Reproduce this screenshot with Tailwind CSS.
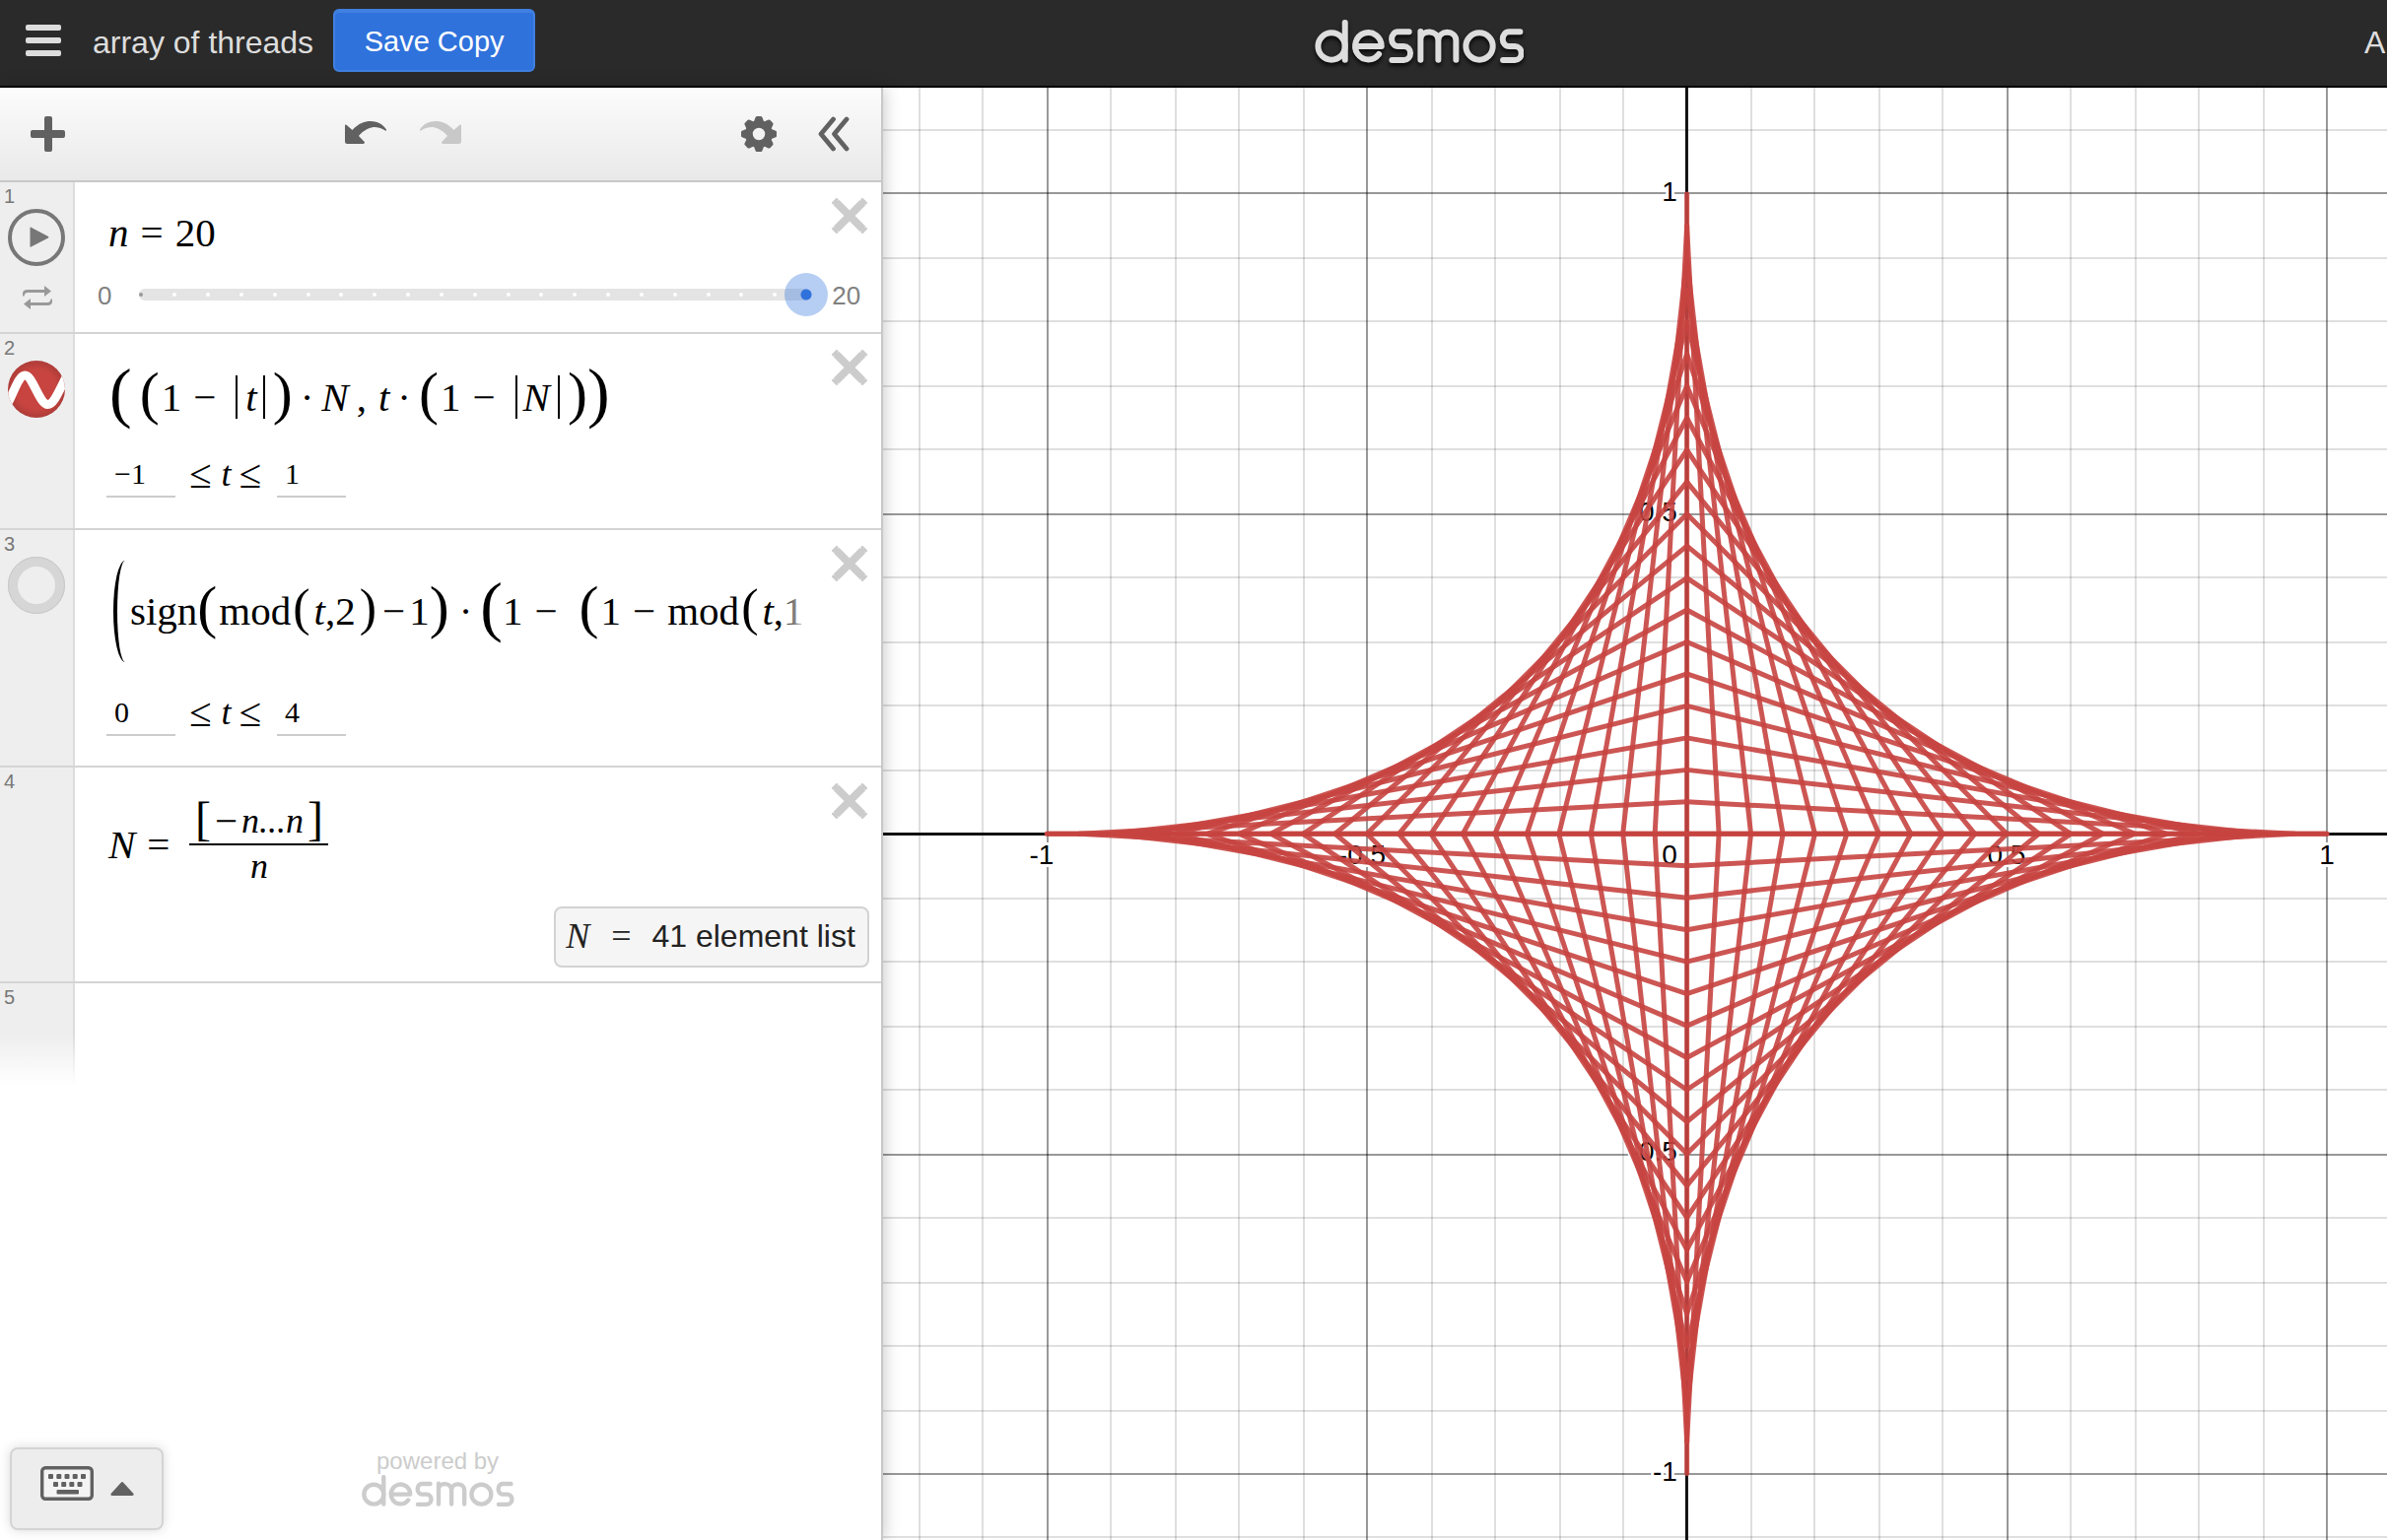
<!DOCTYPE html>
<html lang="en">
<head>
<meta charset="utf-8">
<title>array of threads</title>
<script src="https://cdn.jsdelivr.net/npm/@tailwindcss/browser@4"></script>
</head>
<body class="flex h-screen flex-col overflow-hidden bg-white font-['Liberation_Sans',Arial,sans-serif]">

<svg class="hidden">
  <symbol id="logo" viewBox="0 0 212 44">
    <g transform="translate(-33.6 -20) scale(.3333)" fill="none" stroke="currentColor" stroke-width="18" stroke-linecap="round" stroke-linejoin="round">
      <circle cx="152" cy="141" r="41"/><path d="M193 69V182"/>
      <path d="M225 141H304A40 41 0 1 0 296 165"/>
      <path d="M388 97H354A19 22 0 0 0 354 141H372A20 21 0 0 1 372 183H336"/>
      <path d="M423 182V96M423 118C426 90 477 90 477 124V182M477 124C477 90 531 90 531 124V182"/>
      <circle cx="602" cy="141" r="41"/>
      <path d="M726 97H692A19 22 0 0 0 692 141H710A20 21 0 0 1 710 183H674"/>
    </g>
  </symbol>
  <symbol id="cross" viewBox="0 0 36 36">
    <path d="M4.500 4.500L31.500 31.500M31.500 4.500L4.500 31.500" stroke="#ccc" stroke-width="8" stroke-linecap="butt"/>
    <path d="M4.500 4.500L31.500 31.500M31.500 4.500L4.500 31.500" stroke="#ccc" stroke-width="5" stroke-linecap="round"/>
    <path d="M5 1.500L1.500 5M31 1.500L34.500 5M5 34.500L1.500 31M31 34.500L34.500 31" stroke="#ccc" stroke-width="3" stroke-linecap="round"/>
  </symbol>
  <symbol id="undo" viewBox="0 0 42 23">
    <path fill="currentColor" d="M1.500 3.800L7.500 9C14 2 20 0 26 0C34 0 39 4 42 8.500C42 10 41.500 10 40.500 9.200C36 6.500 31 5.600 28 6.200C22 7.500 17 11 14 15L20 21.300Q20 23 18.500 23H2.500Q0 23 0 20.500V5Q0 3 1.500 3.800Z"/>
  </symbol>
</svg>

<header class="flex h-[89px] shrink-0 items-start border-b-2 border-black bg-[#2a2a2a] text-[#ddd]">
  <div class="flex w-[55%] items-start pl-[26px]">
    <button aria-label="Menu" class="mt-[25px] flex w-9 flex-col gap-[7px]">
      <span class="h-1.5 w-full rounded-xs bg-[#ddd]"></span>
      <span class="h-1.5 w-full rounded-xs bg-[#ddd]"></span>
      <span class="h-1.5 w-full rounded-xs bg-[#ddd]"></span>
    </button>
    <h1 class="ml-8 mt-[27px] text-[32px] leading-8 whitespace-nowrap">array of threads</h1>
    <button class="ml-5 mt-[9px] h-16 w-[205px] rounded-md border-2 border-[#4080e0] bg-[#2f72dc] pt-[3px] text-[29px] leading-none whitespace-nowrap text-white shadow-[inset_0_2px_0_#4080e0]">Save Copy</button>
  </div>
  <svg class="ml-0.5 mt-5 h-11 w-[212px] overflow-visible drop-shadow-[0_3px_2px_rgba(0,0,0,0.8)]" role="img" aria-label="desmos"><use href="#logo"/></svg>
  <a href="#" class="ml-auto mt-[27px] w-[23px] text-[32px] leading-8 whitespace-nowrap">A</a>
</header>

<main class="flex min-h-0 flex-1">
  <section class="z-10 flex w-[37%] shrink-0 flex-col border-r-2 border-[#c8c8c8] bg-white shadow-[0_0_16px_rgba(0,0,0,0.25)]">

    <div class="flex h-24 shrink-0 items-center border-b-2 border-[#c8c8c8] bg-linear-to-b from-[#fcfcfc] to-[#e9e9e9] pl-[31px] pr-8 text-[#616161]">
      <button aria-label="Add item"><svg class="h-9 w-9" viewBox="0 0 36 36"><path fill="currentColor" d="M16 0h4q2 0 2 2v12h11q2 0 2 2v4q0 2-2 2H22v12q0 2-2 2h-4q-2 0-2-2V22H2q-2 0-2-2v-4q0-2 2-2h12V2q0-2 2-2z"/></svg></button>
      <div class="flex flex-1 justify-center gap-[34px] pb-1 pr-0.5">
        <button aria-label="Undo"><svg class="h-[23px] w-[42px]"><use href="#undo"/></svg></button>
        <button aria-label="Redo" disabled class="text-[#c8c8c8]"><svg class="h-[23px] w-[42px] -scale-x-100"><use href="#undo"/></svg></button>
      </div>
      <button aria-label="Graph settings"><svg class="h-9 w-9" viewBox="-18 -18 36 36" fill="currentColor">
        <circle r="10" fill="none" stroke="currentColor" stroke-width="7.500"/>
        <g id="t"><path id="tooth" d="M-5.500-11.500L-3.600-16.500Q-3.300-18-2-18H2Q3.300-18 3.600-16.500L5.500-11.500Z"/><use href="#tooth" transform="rotate(90)"/><use href="#tooth" transform="rotate(180)"/><use href="#tooth" transform="rotate(270)"/></g>
        <use href="#t" transform="rotate(45)"/></svg></button>
      <button aria-label="Hide list" class="ml-[42px]"><svg class="h-9 w-8" viewBox="0 0 32 36" fill="none" stroke="currentColor" stroke-width="4.800" stroke-linecap="round" stroke-linejoin="round"><path d="M15.500 3L3 18L15.500 33M29 3L16.500 18L29 33"/></svg></button>
    </div>

    <ol class="flex-1 font-['Liberation_Serif','Times_New_Roman',serif] text-[41px] leading-none text-black">
      <li class="flex h-[154px] border-b-2 border-[#d4d4d4]">
        <div class="flex w-[76px] shrink-0 flex-col items-center gap-[3px] border-r-2 border-[#ddd] bg-[#eee] pt-1 font-['Liberation_Sans',Arial,sans-serif] text-xl leading-5 text-[#777]">
          <span class="self-start pl-1">1</span>
          <button aria-label="Play"><svg class="block h-[58px] w-[58px]" viewBox="0 0 58 58"><circle cx="29" cy="29" r="27" fill="none" stroke="#777" stroke-width="4"/><path fill="#777" d="M22.500 19Q22.500 18.200 23.500 18.700L41 28Q42 28.800 41 29.600L23.500 38.500Q22.500 39 22.500 38.300Z"/></svg></button>
          <button aria-label="Loop" class="pl-0.5 pt-[17px]"><svg class="block h-6 w-[30px]" viewBox="0 0 30 24" fill="#999"><path d="M0 10.500V8Q0 4 5 4H22V0.500Q22 0 22.700 0.500L29 5.500L22.700 10.500Q22 11 22 10.500V7H5Q2 7 1.500 10.500Z"/><path d="M30 13.500V16Q30 20 25 20H8V23.500Q8 24 7.300 23.500L1 18.500L7.300 13.500Q8 13 8 13.500V17H25Q28 17 28.500 13.500Z"/></svg></button>
        </div>
        <div class="min-w-0 flex-1">
          <div class="flex justify-between">
            <div class="flex h-[102px] items-center pl-[34px]"><i>n</i><span class="ml-3">=</span><span class="ml-3">20</span></div>
            <button aria-label="Delete expression 1" class="mr-3.5 mt-4 h-9 w-9"><svg class="h-9 w-9"><use href="#cross"/></svg></button>
          </div>
          <div class="flex h-6 items-center pl-[23px] pr-[21px] font-['Liberation_Sans',Arial,sans-serif] text-[26px] leading-6 text-[#808080]">
            <span class="pt-0.5">0</span>
            <div class="relative ml-7 flex-1">
              <div id="ticks" class="flex h-3 items-center justify-between rounded-full bg-[#e4e4e4]"></div>
              <input type="range" min="0" max="20" value="20" aria-label="n" class="absolute -left-5 -right-[18px] -top-4 h-11 appearance-none bg-transparent [&::-webkit-slider-thumb]:h-11 [&::-webkit-slider-thumb]:w-11 [&::-webkit-slider-thumb]:appearance-none [&::-webkit-slider-thumb]:rounded-full [&::-webkit-slider-thumb]:bg-[radial-gradient(circle,#2f72dc_5px,rgba(47,114,220,0.35)_6px)]">
            </div>
            <span class="ml-[22px] pt-0.5">20</span>
          </div>
        </div>
      </li>

      <li class="flex h-[199px] border-b-2 border-[#d4d4d4]">
        <div class="flex w-[76px] shrink-0 flex-col items-center gap-[3px] border-r-2 border-[#ddd] bg-[#eee] pt-1 font-['Liberation_Sans',Arial,sans-serif] text-xl leading-5 text-[#777]">
          <span class="self-start pl-1">2</span>
          <button aria-label="Hide curve"><svg class="block h-[58px] w-[58px]" viewBox="0 0 58 58"><defs><radialGradient id="rg"><stop offset=".7" stop-color="#c74440"/><stop offset="1" stop-color="#ad3c38"/></radialGradient><clipPath id="cc"><circle cx="29" cy="29" r="29"/></clipPath></defs><circle cx="29" cy="29" r="29" fill="url(#rg)"/><path clip-path="url(#cc)" d="M0 43C7 30 11 15 17.500 15C25 15 32 44.500 40.500 44.500C47 44.500 52 30 60 15" fill="none" stroke="#fff" stroke-width="9"/></svg></button>
        </div>
        <div class="min-w-0 flex-1">
          <div class="flex justify-between">
            <div class="flex h-[118px] items-center whitespace-nowrap pl-[35px] pt-2.5">
              <span class="pb-2.5 text-[68px]">(</span><span class="ml-2 pb-2 text-[60px]">(</span><span class="ml-0.5">1</span><span class="ml-3">−</span><span class="ml-5 h-11 w-0.5 bg-black"></span><i class="ml-2">t</i><span class="ml-1.5 h-11 w-0.5 bg-black"></span><span class="ml-2 pb-2 text-[60px]">)</span><span class="ml-2">·</span><i class="ml-2">N</i><span class="ml-2">,</span><i class="ml-3">t</i><span class="ml-2">·</span><span class="ml-2 pb-2 text-[60px]">(</span><span class="ml-0.5">1</span><span class="ml-3">−</span><span class="ml-5 h-11 w-0.5 bg-black"></span><i class="ml-1.5">N</i><span class="ml-2 h-11 w-0.5 bg-black"></span><span class="ml-2 pb-2 text-[60px]">)</span><span class="pb-2.5 text-[68px]">)</span>
            </div>
            <button aria-label="Delete expression 2" class="mr-3.5 mt-4 h-9 w-9"><svg class="h-9 w-9"><use href="#cross"/></svg></button>
          </div>
          <div class="flex h-12 items-center pl-8 text-4xl leading-none">
            <input aria-label="Lower limit of t" value="−1" class="h-12 w-[70px] border-b-2 border-[#ccc] pl-2 pt-0.5 text-[30px] outline-none">
            <span class="ml-3.5 text-[41px] leading-none">≤</span><i class="ml-2.5">t</i><span class="ml-2 text-[41px] leading-none">≤</span>
            <input aria-label="Upper limit of t" value="1" class="ml-4 h-12 w-[70px] border-b-2 border-[#ccc] pl-2 pt-0.5 text-[30px] outline-none">
          </div>
        </div>
      </li>

      <li class="flex h-[241px] border-b-2 border-[#d4d4d4]">
        <div class="flex w-[76px] shrink-0 flex-col items-center gap-[3px] border-r-2 border-[#ddd] bg-[#eee] pt-1 font-['Liberation_Sans',Arial,sans-serif] text-xl leading-5 text-[#777]">
          <span class="self-start pl-1">3</span>
          <button aria-label="Show curve" class="h-[58px] w-[58px] rounded-full border-10 border-[#d6d6d6] outline-1 -outline-offset-1 outline-[#c8c8c8]"></button>
        </div>
        <div class="min-w-0 flex-1">
          <div class="flex justify-between">
            <div class="relative flex h-[161px] min-w-0 flex-1 items-center overflow-hidden whitespace-nowrap pl-[39px] pt-[3px]">
              <span class="h-[103px] w-3 rounded-tl-[100%_50%] rounded-bl-[100%_50%] border-l-4 border-black"></span><span class="ml-[5px]">sign</span><span class="pb-2 text-[60px]">(</span><span class="ml-0.5">mod</span><span class="ml-0.5 pb-1.5 text-[52px]">(</span><i class="ml-1">t</i><span>,</span><span>2</span><span class="ml-1 pb-1.5 text-[52px]">)</span><span class="ml-1.5">−</span><span class="ml-1">1</span><span class="pb-2 text-[60px]">)</span><span class="ml-2.5">·</span><span class="ml-2 pb-2.5 text-[68px]">(</span><span>1</span><span class="ml-3">−</span><span class="ml-[22px] pb-2 text-[60px]">(</span><span class="ml-0.5">1</span><span class="ml-3">−</span><span class="ml-3">mod</span><span class="ml-0.5 pb-1.5 text-[52px]">(</span><i class="ml-1">t</i><span>,</span><span>1</span>
              <span class="absolute inset-y-0 right-0 w-8 bg-linear-to-r from-white/0 to-white"></span>
            </div>
            <button aria-label="Delete expression 3" class="ml-[22px] mr-3.5 mt-4 h-9 w-9"><svg class="h-9 w-9"><use href="#cross"/></svg></button>
          </div>
          <div class="flex h-12 items-center pl-8 text-4xl leading-none">
            <input aria-label="Lower limit of t" value="0" class="h-12 w-[70px] border-b-2 border-[#ccc] pl-2 pt-0.5 text-[30px] outline-none">
            <span class="ml-3.5 text-[41px] leading-none">≤</span><i class="ml-2.5">t</i><span class="ml-2 text-[41px] leading-none">≤</span>
            <input aria-label="Upper limit of t" value="4" class="ml-4 h-12 w-[70px] border-b-2 border-[#ccc] pl-2 pt-0.5 text-[30px] outline-none">
          </div>
        </div>
      </li>

      <li class="flex h-[219px] border-b-2 border-[#d4d4d4]">
        <div class="w-[76px] shrink-0 border-r-2 border-[#ddd] bg-[#eee] pl-1 pt-1 font-['Liberation_Sans',Arial,sans-serif] text-xl leading-5 text-[#777]">4</div>
        <div class="flex min-w-0 flex-1 flex-col">
          <div class="flex h-[141px] justify-between">
            <div class="flex h-[156px] items-center pl-[34px]">
              <i>N</i><span class="ml-3">=</span>
              <div class="ml-5 flex w-[141px] flex-col items-center text-4xl leading-none">
                <div class="flex h-[46px] w-full items-center justify-center"><span class="pb-1 text-5xl leading-none">[</span><span class="ml-1 text-[41px] leading-none">−</span><i class="ml-1">n...n</i><span class="ml-1 pb-1 text-5xl leading-none">]</span></div>
                <div class="h-[48px] w-full border-t-2 border-black pt-[3px] text-center"><i>n</i></div>
              </div>
            </div>
            <button aria-label="Delete expression 4" class="mr-3.5 mt-4 h-9 w-9"><svg class="h-9 w-9"><use href="#cross"/></svg></button>
          </div>
          <div class="mr-3 flex h-[62px] w-80 items-center self-end rounded-lg border-2 border-[#d2d2d2] bg-[#f5f5f5] pb-0.5 pl-2.5 text-4xl leading-none text-[#222]">
            <i>N</i><span class="ml-[22px]">=</span><span class="ml-[21px] font-['Liberation_Sans',Arial,sans-serif] text-[32px] leading-none whitespace-nowrap">41 element list</span>
          </div>
        </div>
      </li>

      <li>
        <div class="h-[104px] w-[76px] bg-linear-to-b from-[#ddd] from-50% to-white pr-0.5">
          <div class="h-full bg-linear-to-b from-[#eee] from-50% to-white pl-1 pt-1 font-['Liberation_Sans',Arial,sans-serif] text-xl leading-5 text-[#777]">5</div>
        </div>
      </li>
    </ol>

    <footer class="grid shrink-0 grid-cols-[1fr_auto_1fr] items-end pb-2.5 pl-2.5 pr-4">
      <button aria-label="Show keypad" class="flex h-[84px] w-[156px] items-center rounded-lg border-2 border-[#d4d4d4] bg-[#ededed] pl-[29px] text-[#616161] shadow-[0_0_12px_rgba(0,0,0,0.15)]">
        <svg class="mb-3 h-[35px] w-[54px]" viewBox="0 0 54 35"><rect x="1.700" y="1.700" width="50.600" height="31.600" rx="3.500" fill="#f4f4f4" stroke="currentColor" stroke-width="3.400"/><g fill="currentColor"><rect x="8" y="8" width="5" height="5" rx="1"/><rect x="16.300" y="8" width="5" height="5" rx="1"/><rect x="24.500" y="8" width="5" height="5" rx="1"/><rect x="32.700" y="8" width="5" height="5" rx="1"/><rect x="41" y="8" width="5" height="5" rx="1"/><rect x="13" y="16" width="5" height="5" rx="1"/><rect x="21.200" y="16" width="5" height="5" rx="1"/><rect x="29.300" y="16" width="5" height="5" rx="1"/><rect x="37.500" y="16" width="5" height="5" rx="1"/><rect x="16.500" y="24" width="22.500" height="4.500" rx="1"/></g></svg>
        <svg class="ml-[17px] h-3.5 w-6" viewBox="0 0 24 14" fill="currentColor"><path d="M10.800.700Q12-.500 13.200.700L23.500 12Q24 14 22 14H2Q0 14 .500 12Z"/></svg>
      </button>
      <div class="mb-6 flex w-[156px] flex-col items-center text-2xl leading-none text-[#ccc]">
        <span class="mb-0.5 whitespace-nowrap">powered by</span>
        <svg class="h-8 w-[156px] overflow-visible" role="img" aria-label="desmos"><use href="#logo"/></svg>
      </div>
      <span></span>
    </footer>
  </section>

  <section class="min-w-0 flex-1" aria-label="Graph">
    <svg id="graph" class="block h-full w-full" viewBox="896 89 1526 1474" preserveAspectRatio="xMidYMid slice"></svg>
  </section>
</main>

<script>
  document.getElementById('ticks').innerHTML = Array.from({ length: 21 }, (_, i) =>
    `<span class="h-1 w-1 rounded-full ${i ? 'bg-white' : 'bg-[#999]'}"></span>`).join('');

  const cx = 1711.7, cy = 846.3, unit = 649.3;
  let s = '<g stroke="#000" stroke-width="2" shape-rendering="crispEdges">';
  for (let k = -14; k <= 14; k++) {
    if (!k) continue;
    const o = k % 5 ? .12 : .4;
    const x = Math.floor((1712 + k * 64.92) / 2) * 2 + 1;
    const y = Math.round((846.3 + k * 64.97) / 2) * 2;
    s += `<path d="M${x} 0V1700" opacity="${o}"/><path d="M800 ${y}H2500" opacity="${o}"/>`;
  }
  s += '</g><path d="M1711.5 0V1700M800 846.5H2500" stroke="#111" stroke-width="3"/>';

  s += '<g font-family="Liberation Sans, Arial, sans-serif" font-size="28" stroke="#fff" stroke-width="6" stroke-linejoin="round" paint-order="stroke">';
  for (const [v, t] of [[-1, '-1'], [-.5, '-0.5'], [.5, '0.5'], [1, '1']]) {
    const shift = v < 0 ? 5 : 0;
    s += `<text x="${Math.round(cx + v * unit) - shift}" y="877" text-anchor="middle">${t}</text>`;
    s += `<text x="1702" y="${Math.round(cy - v * unit) + 7}" text-anchor="end">${t}</text>`;
  }
  s += '<text x="1702" y="877" text-anchor="end">0</text></g>';

  // One bent thread for every N in [-n...n]/n
  s += '<g fill="none" stroke="#c74440" stroke-width="5" stroke-opacity=".9" stroke-linejoin="round" stroke-linecap="round">';
  for (let i = -20; i <= 20; i++) {
    const N = i / 20, h = (1 - Math.abs(N)) * unit;
    s += `<path d="M${cx} ${cy + h}L${cx + N * unit} ${cy}L${cx} ${cy - h}"/>`;
  }
  // The two end threads (N = ±1) lie flat on the x-axis
  s += `<path d="M${cx - unit} ${cy}H${cx + unit}"/>`;
  document.getElementById('graph').innerHTML = s + '</g>';
</script>
</body>
</html>
